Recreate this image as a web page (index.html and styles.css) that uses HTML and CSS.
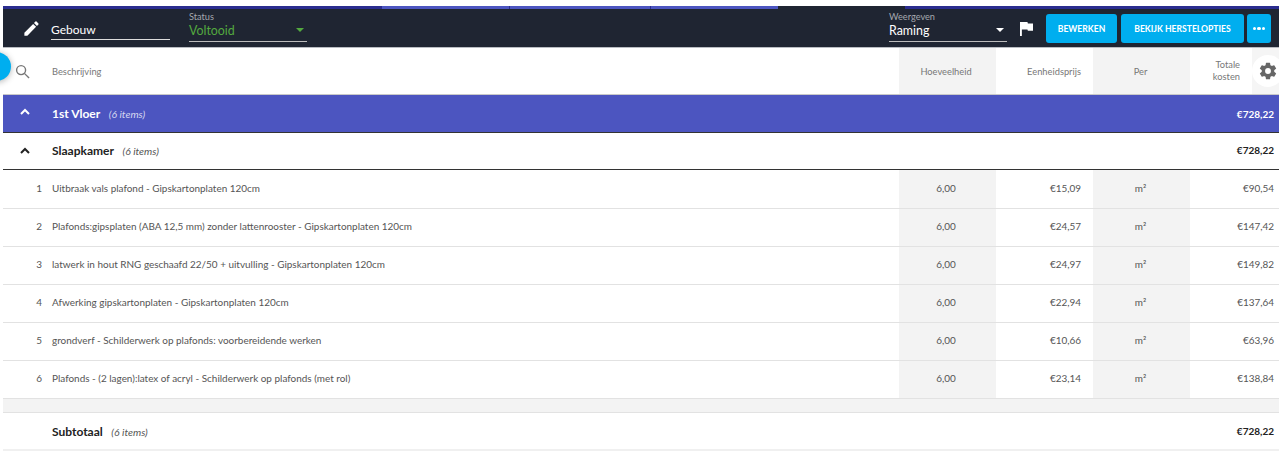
FILE: index.html
```html
<!DOCTYPE html>
<html lang="nl">
<head>
  <meta charset="UTF-8">
  <title>Gebouw - Raming</title>
  <link rel="stylesheet" href="styles.css">
</head>
<body>
  <div class="strip">
    <span class="seg seg-a"></span>
    <span class="seg seg-b"></span>
    <span class="seg seg-c"></span>
    <span class="seg seg-d"></span>
    <span class="seg seg-e"></span>
    <span class="seg seg-f"></span>
  </div>

  <header class="navbar">
    <svg class="icon-edit" viewBox="0 0 24 24"><path d="M3 17.25V21h3.75L17.81 9.94l-3.75-3.75L3 17.25zM20.71 7.04a1 1 0 0 0 0-1.41l-2.34-2.34a1 1 0 0 0-1.41 0l-1.83 1.83 3.75 3.75 1.83-1.83z"/></svg>
    <div class="name-field">Gebouw</div>
    <div class="select-field status-field">
      <label>Status</label>
      <div class="select-value green">Voltooid <i class="caret caret-green"></i></div>
    </div>
    <div class="select-field view-field">
      <label>Weergeven</label>
      <div class="select-value">Raming <i class="caret"></i></div>
    </div>
    <svg class="icon-flag" viewBox="0 0 14 15"><path d="M0 0h8l.5 1.5H14v8H8.5L8 8H2v7H0z"/></svg>
    <button class="btn btn-edit">BEWERKEN</button>
    <button class="btn btn-repair">BEKIJK HERSTELOPTIES</button>
    <button class="btn btn-more"><i></i><i></i><i></i></button>
  </header>

  <div class="fab"></div>

  <div class="row head-row">
    <div class="c-num">
      <svg class="icon-search" viewBox="0 0 16 16"><circle cx="6.5" cy="6.5" r="4.8"/><path d="M10 10l5 5"/></svg>
    </div>
    <div class="c-desc">Beschrijving</div>
    <div class="c-qty">Hoeveelheid</div>
    <div class="c-price">Eenheidsprijs</div>
    <div class="c-per">Per</div>
    <div class="c-total">Totale<br>kosten</div>
    <div class="c-gear">
      <span class="gear-wrap">
        <svg class="icon-gear" viewBox="0 0 24 24"><path d="M19.43 12.98c.04-.32.07-.64.07-.98s-.03-.66-.07-.98l2.11-1.65a.5.5 0 0 0 .12-.64l-2-3.46a.5.5 0 0 0-.61-.22l-2.49 1a7.3 7.3 0 0 0-1.69-.98l-.38-2.65A.49.49 0 0 0 14 2h-4a.49.49 0 0 0-.49.42l-.38 2.65c-.61.25-1.17.59-1.69.98l-2.49-1a.5.5 0 0 0-.61.22l-2 3.46a.49.49 0 0 0 .12.64l2.11 1.65c-.04.32-.07.65-.07.98s.03.66.07.98l-2.11 1.65a.5.5 0 0 0-.12.64l2 3.46c.12.22.39.3.61.22l2.49-1c.52.4 1.08.73 1.69.98l.38 2.65c.03.24.24.42.49.42h4c.25 0 .46-.18.49-.42l.38-2.65c.61-.25 1.17-.59 1.69-.98l2.49 1c.23.09.49 0 .61-.22l2-3.46a.5.5 0 0 0-.12-.64l-2.11-1.65zM12 15.5a3.5 3.5 0 1 1 0-7 3.5 3.5 0 0 1 0 7z"/></svg>
      </span>
    </div>
  </div>

  <div class="group-row floor-row">
    <svg class="chevron" viewBox="0 0 10 7"><path d="M1 6l4-4 4 4"/></svg>
    <div class="group-title"><b>1st Vloer</b> <em>(6 items)</em></div>
    <div class="group-total">€728,22</div>
  </div>

  <div class="group-row room-row">
    <svg class="chevron" viewBox="0 0 10 7"><path d="M1 6l4-4 4 4"/></svg>
    <div class="group-title"><b>Slaapkamer</b> <em>(6 items)</em></div>
    <div class="group-total">€728,22</div>
  </div>

  <div class="row item-row">
    <div class="c-num">1</div>
    <div class="c-desc">Uitbraak vals plafond - Gipskartonplaten 120cm</div>
    <div class="c-qty">6,00</div>
    <div class="c-price">€15,09</div>
    <div class="c-per">m²</div>
    <div class="c-amount">€90,54</div>
  </div>
  <div class="row item-row">
    <div class="c-num">2</div>
    <div class="c-desc">Plafonds:gipsplaten (ABA 12,5 mm) zonder lattenrooster - Gipskartonplaten 120cm</div>
    <div class="c-qty">6,00</div>
    <div class="c-price">€24,57</div>
    <div class="c-per">m²</div>
    <div class="c-amount">€147,42</div>
  </div>
  <div class="row item-row">
    <div class="c-num">3</div>
    <div class="c-desc">latwerk in hout RNG geschaafd 22/50 + uitvulling - Gipskartonplaten 120cm</div>
    <div class="c-qty">6,00</div>
    <div class="c-price">€24,97</div>
    <div class="c-per">m²</div>
    <div class="c-amount">€149,82</div>
  </div>
  <div class="row item-row">
    <div class="c-num">4</div>
    <div class="c-desc">Afwerking gipskartonplaten - Gipskartonplaten 120cm</div>
    <div class="c-qty">6,00</div>
    <div class="c-price">€22,94</div>
    <div class="c-per">m²</div>
    <div class="c-amount">€137,64</div>
  </div>
  <div class="row item-row">
    <div class="c-num">5</div>
    <div class="c-desc">grondverf - Schilderwerk op plafonds: voorbereidende werken</div>
    <div class="c-qty">6,00</div>
    <div class="c-price">€10,66</div>
    <div class="c-per">m²</div>
    <div class="c-amount">€63,96</div>
  </div>
  <div class="row item-row">
    <div class="c-num">6</div>
    <div class="c-desc">Plafonds - (2 lagen):latex of acryl - Schilderwerk op plafonds (met rol)</div>
    <div class="c-qty">6,00</div>
    <div class="c-price">€23,14</div>
    <div class="c-per">m²</div>
    <div class="c-amount">€138,84</div>
  </div>

  <div class="spacer-row"></div>

  <div class="group-row subtotal-row">
    <div class="group-title"><b>Subtotaal</b> <em>(6 items)</em></div>
    <div class="group-total">€728,22</div>
  </div>
</body>
</html>
```

FILE: styles.css
```css
body {
  margin: 6px 4px 0 3px;
  background-color: #fff;
  font-family: "Lato", "Noto Sans", sans-serif;
  font-size: 9.95px;
  color: #555;
  overflow: hidden;
  height: 450px;
}

/* Top strip */
.strip {
  display: flex;
  height: 3px;
  background-color: #2b2d8f;
}

.seg { display: block; }
.seg-a { width: 379px; }
.seg-b { width: 127px; background-color: #4c55c0; margin-right: 1px; }
.seg-c { width: 140px; background-color: #4c55c0; margin-right: 1px; }
.seg-d { width: 127px; background-color: #4c55c0; }
.seg-e { width: 127px; background-color: #1f2532; }
.seg-f { flex: 1; }

/* Navbar */
.navbar {
  display: flex;
  align-items: flex-start;
  height: 38px;
  background-color: #1f2532;
  color: #fff;
  border-bottom: 1px solid #b9bcc2;
}

.icon-edit {
  width: 19px;
  height: 19px;
  fill: #fff;
  margin: 10px 0 0 19px;
}

.name-field {
  width: 119px;
  height: 31px;
  margin-left: 10px;
  box-sizing: border-box;
  padding-top: 12px;
  font-size: 12px;
  line-height: 17px;
  border-bottom: 1px solid #ddd;
}

.select-field {
  width: 118px;
  height: 33px;
  box-sizing: border-box;
  padding-top: 2px;
  border-bottom: 1px solid #bbb;
}

.select-field label {
  display: block;
  font-size: 9.2px;
  line-height: 11px;
  color: #a5a8ae;
}

.select-value {
  display: flex;
  justify-content: space-between;
  align-items: center;
  font-size: 12.4px;
  line-height: 17px;
  padding-right: 3px;
}

.green { color: #53a93f; }

.status-field { margin-left: 19px; }
.view-field { margin-left: 582px; }

.caret {
  width: 0;
  height: 0;
  margin-top: -2px;
  border-left: 4px solid transparent;
  border-right: 4px solid transparent;
  border-top: 4px solid #fff;
}

.caret-green { border-top-color: #53a93f; }

.icon-flag {
  width: 13px;
  height: 14px;
  fill: #fff;
  margin: 13px 0 0 13px;
}

.btn {
  height: 29px;
  margin-top: 5px;
  border: none;
  border-radius: 3px;
  background-color: #00aeef;
  color: #fff;
  font-family: inherit;
  font-size: 8.6px;
  font-weight: 700;
  padding: 0;
}

.btn-edit { width: 71px; margin-left: 13px; }
.btn-repair { width: 123px; margin-left: 4px; }

.btn-more {
  display: flex;
  justify-content: center;
  align-items: center;
  gap: 1px;
  width: 24px;
  margin-left: 3px;
}

.btn-more i {
  width: 3.5px;
  height: 3.5px;
  border-radius: 50%;
  background-color: #fff;
}

/* Floating button on the left edge */
.fab {
  position: absolute;
  left: -18px;
  top: 52px;
  width: 29px;
  height: 29px;
  border-radius: 50%;
  background-color: #00aeef;
  box-shadow: 0 1px 6px rgba(0, 0, 0, 0.3);
}

/* Table rows */
.row {
  display: flex;
  align-items: stretch;
}

.row > div {
  display: flex;
  align-items: center;
}

.c-num {
  width: 39px;
  justify-content: flex-end;
}

.c-desc {
  flex: 1;
  padding-left: 10px;
}

.c-qty,
.c-price,
.c-per {
  width: 97px;
  box-sizing: border-box;
}

.c-qty,
.c-per {
  justify-content: center;
  background-color: #f3f3f3;
}

.c-qty { padding-right: 3px; }
.c-per { padding-right: 2px; }

.c-price {
  justify-content: flex-end;
  padding-right: 12px;
}

.c-amount {
  width: 89px;
  justify-content: flex-end;
  box-sizing: border-box;
  padding-right: 5px;
}

.head-row {
  height: 47px;
  box-sizing: border-box;
  color: #777;
  font-size: 9.3px;
  border-bottom: 1px solid #c9c9c9;
}

.head-row .c-num {
  justify-content: flex-start;
  padding-left: 12px;
  width: 27px;
}

.icon-search {
  width: 15px;
  height: 15px;
  fill: none;
  stroke: #777;
  stroke-width: 1.5;
}

.c-total {
  width: 62px;
  box-sizing: border-box;
  padding-right: 12px;
  justify-content: flex-end;
  text-align: right;
  line-height: 12px;
}

.c-gear {
  width: 27px;
  background-color: #f5f5f5;
  justify-content: flex-start;
}

.gear-wrap {
  display: flex;
  align-items: center;
  justify-content: center;
  width: 32px;
  height: 32px;
  flex: none;
  border-radius: 50%;
  background-color: #fff;
}

.icon-gear {
  width: 20px;
  height: 20px;
  fill: #666;
}

.group-row {
  display: flex;
  align-items: center;
  position: relative;
  box-sizing: border-box;
  padding: 0 5px 0 49px;
}

.chevron {
  position: absolute;
  left: 17px;
  top: 13px;
  width: 10px;
  height: 7px;
  fill: none;
  stroke: currentColor;
  stroke-width: 2;
}

.room-row .chevron { top: 14px; }

.group-title {
  flex: 1;
  font-size: 10px;
}

.group-title b {
  font-size: 12px;
  margin-right: 6px;
}

.group-title em {
  font-size: 10.4px;
}

.group-total {
  font-weight: 700;
  font-size: 10px;
}

.floor-row {
  height: 38px;
  background-color: #4c55c0;
  color: #fff;
  border-bottom: 1px solid #333;
}

.floor-row em { color: #d6d8f0; }

.room-row {
  height: 37px;
  padding-bottom: 2px;
  color: #222;
  border-bottom: 1px solid #333;
}

.room-row em,
.subtotal-row em {
  color: #555;
}

.item-row {
  height: 38px;
  box-sizing: border-box;
  border-bottom: 1px solid #e2e2e2;
}

.item-row > div {
  box-sizing: border-box;
  padding-bottom: 4px;
}

/* the first item row is one pixel taller, under the dark rule */
.room-row + .item-row { height: 39px; }
.room-row + .item-row > div { padding-bottom: 2px; }

.spacer-row {
  height: 14px;
  background-color: #f3f3f3;
  border-bottom: 1px solid #e2e2e2;
  box-sizing: border-box;
}

.subtotal-row {
  height: 38px;
  color: #222;
  border-bottom: 2px solid #f0f0f0;
}
```
